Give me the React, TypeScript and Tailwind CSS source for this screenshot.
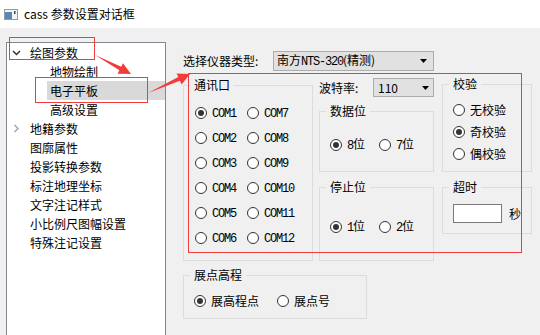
import type { ReactNode } from 'react';

const mono = "font-['Liberation_Mono',monospace] tracking-[-1.2px]";

function Radio({ checked = false, children }: { checked?: boolean; children: ReactNode }) {
  return (
    <div className="flex h-[16px] items-center gap-[5px]">
      <span className="flex h-[12px] w-[12px] shrink-0 items-center justify-center rounded-full border border-[#333333] bg-white">
        {checked && <span className="h-[6px] w-[6px] rounded-full bg-[#333333]" />}
      </span>
      <span className="whitespace-nowrap leading-[16px]">{children}</span>
    </div>
  );
}

function Group({ title, className, children }: { title: string; className?: string; children?: ReactNode }) {
  return (
    <fieldset className={`border border-[#dcdcdc] ${className ?? ''}`}>
      <legend className="ml-[6px] px-[4px] leading-[16px]">{title}</legend>
      {children}
    </fieldset>
  );
}

function Combo({ className, children }: { className?: string; children: ReactNode }) {
  return (
    <div className={`flex items-center justify-between border border-[#adadad] bg-[#e1e1e1] ${className ?? ''}`}>
      <span className="whitespace-nowrap">{children}</span>
      <svg width="7" height="4" viewBox="0 0 7 4">
        <path d="M0 0h7L3.5 4z" fill="#000" />
      </svg>
    </div>
  );
}

function Chevron({ open }: { open: boolean }) {
  return open ? (
    <svg width="9" height="6" viewBox="0 0 9 6">
      <polyline points="1,1 4.5,4.5 8,1" fill="none" stroke="#333" strokeWidth="1.5" />
    </svg>
  ) : (
    <svg width="9" height="9" viewBox="0 0 9 9">
      <polyline points="2.5,1 6,4.5 2.5,8" fill="none" stroke="#a6a6a6" strokeWidth="1.5" />
    </svg>
  );
}

const topItems = ['图廓属性', '投影转换参数', '标注地理坐标', '文字注记样式', '小比例尺图幅设置', '特殊注记设置'];

const comPorts = [1, 7, 2, 8, 3, 9, 4, 10, 5, 11, 6, 12];

export default function App() {
  return (
    <div className="relative h-[335px] w-[540px] overflow-hidden bg-[#f0f0f0] font-['Noto_Sans_CJK_SC',sans-serif] text-[12px] text-black">
      {/* Title bar */}
      <div className="flex h-[28px] items-center bg-white pl-[4px]">
        <svg width="14" height="11" viewBox="0 0 14 11" className="mr-[6px]">
          <rect x="0.5" y="0.5" width="13" height="10" fill="#f4f4f4" stroke="#9a9a9a" />
          <rect x="1" y="3" width="7" height="7" fill="#5b87b8" />
          <rect x="10" y="2" width="1.5" height="3" fill="#444" />
        </svg>
        <span>cass 参数设置对话框</span>
      </div>

      <div className="flex h-[307px]">
        {/* Tree */}
        <div className="ml-[6px] mt-[14px] w-[160px] self-stretch border border-b-0 border-[#828790] bg-white">
          <div className="flex h-[19px] items-center pl-[5px]">
            <span className="mr-[9px] flex w-[9px] justify-center">
              <Chevron open />
            </span>
            <span>绘图参数</span>
          </div>
          <div className="ml-[40px] flex h-[19px] items-center pl-[3px]">地物绘制</div>
          <div className="ml-[40px] flex h-[19px] items-center bg-[#d9d9d9] pl-[3px]">电子平板</div>
          <div className="ml-[40px] flex h-[19px] items-center pl-[3px]">高级设置</div>
          <div className="flex h-[19px] items-center pl-[5px]">
            <span className="mr-[9px] flex w-[9px] justify-center">
              <Chevron open={false} />
            </span>
            <span>地籍参数</span>
          </div>
          {topItems.map((t) => (
            <div key={t} className="flex h-[19px] items-center pl-[23px]">
              {t}
            </div>
          ))}
        </div>

        {/* Settings */}
        <div className="ml-[17px] flex flex-col">
          <div className="mt-[23px] flex h-[20px] items-center">
            <span className="w-[90px]">选择仪器类型:</span>
            <Combo className="h-[20px] w-[161px] pl-[3px] pr-[6px]">
              南方<span className={mono}>NTS-320</span>(精测)
            </Combo>
          </div>

          <div className="mt-[5px] flex items-start">
            <Group title="通讯口" className="mt-[1px] h-[184px] w-[130px]">
              <div className="mt-[12px] grid grid-cols-[52px_auto] gap-y-[9px] pl-[11px]">
                {comPorts.map((n) => (
                  <Radio key={n} checked={n === 1}>
                    <span className={mono}>COM{n}</span>
                  </Radio>
                ))}
              </div>
            </Group>

            <div className="ml-[6px] flex w-[115px] flex-col">
              <div className="mt-[2px] flex h-[19px] items-center">
                <span className="w-[54px]">波特率:</span>
                <Combo className="h-[19px] w-[61px] pl-[4px] pr-[4px]">110</Combo>
              </div>
              <Group title="数据位" className="mt-[6px] h-[69px] w-[115px]">
                <div className="mt-[18px] grid grid-cols-[49px_auto] pl-[10px]">
                  <Radio checked>
                    <span className={mono}>8</span>位
                  </Radio>
                  <Radio>
                    <span className={mono}>7</span>位
                  </Radio>
                </div>
              </Group>
              <Group title="停止位" className="mt-[7px] h-[82px] w-[115px]">
                <div className="mt-[24px] grid grid-cols-[49px_auto] pl-[10px]">
                  <Radio checked>
                    <span className={mono}>1</span>位
                  </Radio>
                  <Radio>
                    <span className={mono}>2</span>位
                  </Radio>
                </div>
              </Group>
            </div>

            <div className="ml-[8px] flex w-[90px] flex-col">
              <Group title="校验" className="h-[96px] w-[90px]">
                <div className="mt-[10px] flex flex-col gap-[6px] pl-[10px]">
                  <Radio>无校验</Radio>
                  <Radio checked>奇校验</Radio>
                  <Radio>偶校验</Radio>
                </div>
              </Group>
              <Group title="超时" className="mt-[7px] h-[55px] w-[90px]">
                <div className="mt-[9px] flex items-center gap-[7px] pl-[10px]">
                  <div className="h-[19px] w-[49px] border border-[#7a7a7a] bg-white" />
                  <span>秒</span>
                </div>
              </Group>
            </div>
          </div>

          <Group title="展点高程" className="mt-[6px] h-[52px] w-[184px]">
            <div className="mt-[10px] grid grid-cols-[83px_auto] pl-[10px]">
              <Radio checked>展高程点</Radio>
              <Radio>展点号</Radio>
            </div>
          </Group>
        </div>
      </div>

      {/* Red annotations */}
      <svg className="pointer-events-none absolute left-0 top-0" width="540" height="335" viewBox="0 0 540 335">
        <g fill="none" stroke="#f23c3c" strokeWidth="1">
          <rect x="9.5" y="37.5" width="85" height="22" />
          <rect x="35.5" y="77.5" width="112" height="25" />
          <rect x="188.5" y="73.5" width="333" height="179" />
        </g>
        <g fill="#f23c3c">
          <polygon points="95,55 121.2,66.7 123,63.2 131,74 117.6,73.8 119.4,70.3" />
          <polygon points="148,93 178.3,77.1 176.6,73.4 190,74 181.6,84.4 179.9,80.7" />
        </g>
      </svg>
    </div>
  );
}
